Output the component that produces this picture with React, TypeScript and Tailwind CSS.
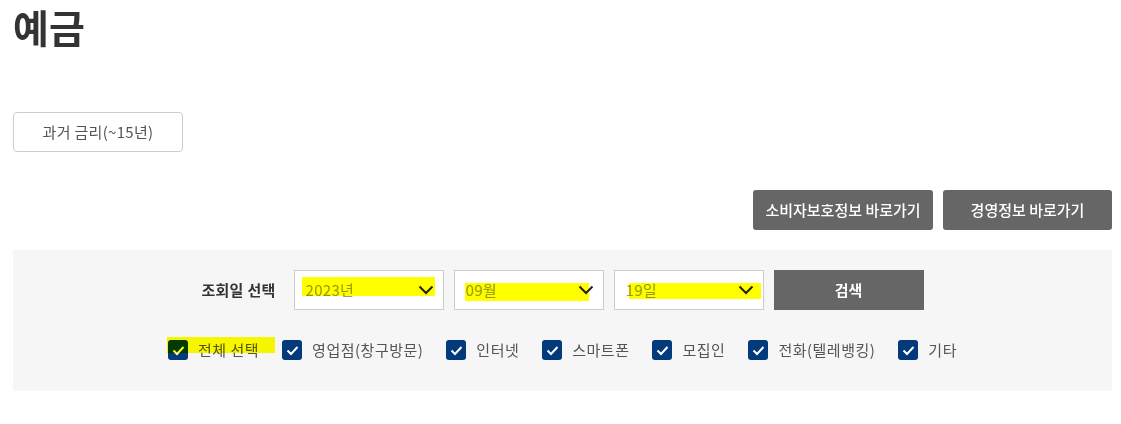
import React from 'react';

const font = { fontFamily: '"Noto Sans CJK KR", "Noto Sans", sans-serif' };

const Chevron = () => (
  <svg width="16" height="10" viewBox="0 0 16 10" className="shrink-0">
    <polyline points="1.5,1.5 8,8 14.5,1.5" fill="none" stroke="#222" strokeWidth="2" />
  </svg>
);

const Check = () => (
  <span className="relative flex h-[20px] w-[20px] shrink-0 items-center justify-center rounded-[3px] bg-[#023a7b]">
    <svg width="13" height="11" viewBox="0 0 13 11">
      <polyline points="1.5,5.5 5,9 11.5,2" fill="none" stroke="#fff" strokeWidth="2" />
    </svg>
  </span>
);

type SelectProps = { value: string; mark: string };

const Select = ({ value, mark }: SelectProps) => (
  <div className="relative flex h-[40px] w-[150px] items-center justify-between border border-[#ccc] bg-white pl-[11px] pr-[9px]">
    <span className="text-[15px] tracking-[0.3px] text-[#999]">{value}</span>
    <Chevron />
    <span className={`pointer-events-none absolute bg-[#ffff00] mix-blend-multiply ${mark}`} />
  </div>
);

const channels = ['영업점(창구방문)', '인터넷', '스마트폰', '모집인', '전화(텔레뱅킹)', '기타'];

export default function App() {
  return (
    <div className="min-h-[424px] bg-white" style={font}>
      <div className="ml-[13px] w-[1099px]">
        <h1 className="text-[39px] font-bold leading-[52px] text-[#333]">예금</h1>

        <button className="mt-[60px] flex h-[40px] w-[170px] items-center justify-center rounded-[4px] border border-[#ccc] bg-white text-[15px] tracking-[0.3px] text-[#555]">
          과거 금리(~15년)
        </button>

        <div className="mt-[38px] flex justify-end gap-[10px]">
          <button className="h-[40px] w-[180px] rounded-[3px] bg-[#666] text-[15px] font-medium text-white">
            소비자보호정보 바로가기
          </button>
          <button className="h-[40px] w-[169px] rounded-[3px] bg-[#666] text-[15px] font-medium text-white">
            경영정보 바로가기
          </button>
        </div>

        <div className="mt-[20px] h-[141px] bg-[#f6f6f6] pt-[20px]">
          <div className="flex items-center justify-center">
            <span className="mr-[18px] text-[15px] font-bold tracking-[0.3px] text-[#333]">조회일 선택</span>
            <div className="flex gap-[10px]">
              <Select value="2023년" mark="left-[7px] top-[6px] h-[19px] w-[133px]" />
              <Select value="09월" mark="left-[10px] top-[12px] h-[18px] w-[124px]" />
              <Select value="19일" mark="left-[14px] top-[12px] h-[16px] w-[132px]" />
              <button className="h-[40px] w-[150px] bg-[#666] text-[15px] font-bold text-white">검색</button>
            </div>
          </div>

          <div className="mt-[29px] flex items-center justify-center gap-[23px]">
            <label className="relative flex items-center gap-[10px]">
              <Check />
              <span className="text-[15px] tracking-[0.5px] text-[#555]">전체 선택</span>
              <span className="pointer-events-none absolute -left-[1px] -top-[2px] h-[16px] w-[108px] bg-[#ffff00] mix-blend-multiply" />
            </label>
            {channels.map((c) => (
              <label key={c} className="flex items-center gap-[10px]">
                <Check />
                <span className="text-[15px] tracking-[0.5px] text-[#555]">{c}</span>
              </label>
            ))}
          </div>
        </div>
      </div>
    </div>
  );
}
